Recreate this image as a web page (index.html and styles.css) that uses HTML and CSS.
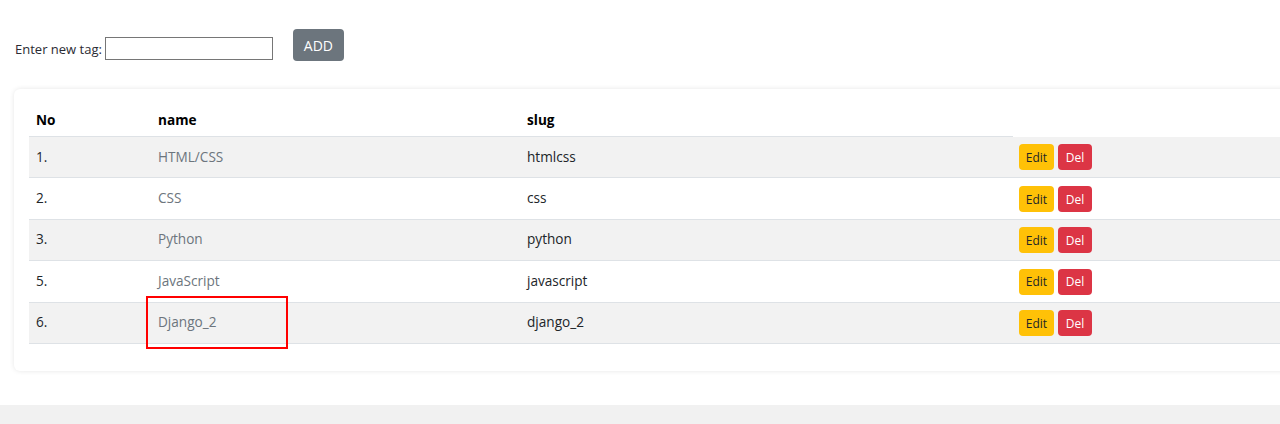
FILE: index.html
```html
<!DOCTYPE html>
<html lang="en">
<head>
<meta charset="utf-8">
<title>Tags</title>
<link rel="stylesheet" href="styles.css">
</head>
<body>
<main class="page">
  <form class="tag-form">
    <label class="tag-label" for="tag">Enter new tag:</label>
    <input class="tag-input" id="tag" type="text">
    <button class="btn btn-add" type="button">ADD</button>
  </form>

  <section class="card">
    <table class="tags">
      <thead>
        <tr>
          <th class="col-no">No</th>
          <th class="col-name">name</th>
          <th class="col-slug">slug</th>
        </tr>
      </thead>
      <tbody>
        <tr>
          <td>1.</td>
          <td class="name">HTML/CSS</td>
          <td>htmlcss</td>
          <td class="actions"><button class="btn btn-edit">Edit</button><button class="btn btn-del">Del</button></td>
        </tr>
        <tr>
          <td>2.</td>
          <td class="name">CSS</td>
          <td>css</td>
          <td class="actions"><button class="btn btn-edit">Edit</button><button class="btn btn-del">Del</button></td>
        </tr>
        <tr>
          <td>3.</td>
          <td class="name">Python</td>
          <td>python</td>
          <td class="actions"><button class="btn btn-edit">Edit</button><button class="btn btn-del">Del</button></td>
        </tr>
        <tr>
          <td>5.</td>
          <td class="name">JavaScript</td>
          <td>javascript</td>
          <td class="actions"><button class="btn btn-edit">Edit</button><button class="btn btn-del">Del</button></td>
        </tr>
        <tr>
          <td>6.</td>
          <td class="name marked">Django_2<span class="highlight"></span></td>
          <td>django_2</td>
          <td class="actions"><button class="btn btn-edit">Edit</button><button class="btn btn-del">Del</button></td>
        </tr>
      </tbody>
    </table>
  </section>
</main>
<footer class="footer"></footer>
</body>
</html>
```

FILE: styles.css
```css
html {
  overflow: hidden;
}

body {
  margin: 0;
  font-family: "Open Sans", "Noto Sans", sans-serif;
  color: #212529;
  background: #fff;
  width: 1280px;
  height: 424px;
}

.page {
  padding: 29px 0 0 14px;
  height: 376px;
  box-sizing: border-box;
}

.tag-form {
  display: flex;
  align-items: flex-start;
  margin: 0 0 0 1px;
  height: 60px;
}

.tag-label {
  font-size: 13px;
  line-height: 18px;
  margin-top: 11px;
  color: #2b2b33;
}

.tag-input {
  box-sizing: border-box;
  width: 168px;
  height: 23px;
  margin: 8px 0 0 3px;
  border: 1px solid #767676;
  border-radius: 0;
  padding: 0 4px;
}

.btn {
  font-family: inherit;
  border: 0;
  border-radius: 4px;
  cursor: pointer;
}

.btn-add {
  margin-left: 20px;
  width: 51px;
  height: 32px;
  background: #6c757d;
  color: #fff;
  font-size: 14px;
  padding: 0;
}

.card {
  width: 1320px;
  box-sizing: border-box;
  padding: 15px 15px 27px 15px;
  background: #fff;
  border-radius: 6px;
  box-shadow: 0 0 5px rgba(0, 0, 0, 0.1);
}

.tags {
  width: 1290px;
  border-collapse: collapse;
  font-size: 13.6px;
}

.tags th {
  text-align: left;
  font-weight: 700;
  color: #000;
  height: 30px;
  padding: 0 7px 2px;
  border-bottom: 1px solid #dee2e6;
}

.col-no { width: 108px; }
.col-name { width: 355px; }
.col-slug { width: 479px; }

.tags td {
  height: 38.4px;
  padding: 0 7px 2px;
  border-bottom: 1px solid #dee2e6;
  vertical-align: middle;
}

.tags tbody tr:nth-child(odd) td {
  background: #f2f2f2;
}

.tags td.name {
  color: #6c757d;
}

.tags td.actions {
  padding: 1px 7px 0 6px;
}

.actions .btn {
  height: 26px;
  font-size: 12px;
  padding: 0;
  vertical-align: middle;
}

.btn-edit {
  background: #ffc107;
  color: #212529;
  width: 35px;
}

.btn-del {
  background: #dc3545;
  color: #fff;
  width: 34px;
  margin-left: 4px;
}

.tags td.marked {
  position: relative;
}

.highlight {
  position: absolute;
  left: -5px;
  top: -7px;
  width: 142px;
  height: 53px;
  box-sizing: border-box;
  border: 2px solid #ff0000;
}

.footer {
  height: 19px;
  margin-top: 29px;
  background: #f1f1f1;
}
```
